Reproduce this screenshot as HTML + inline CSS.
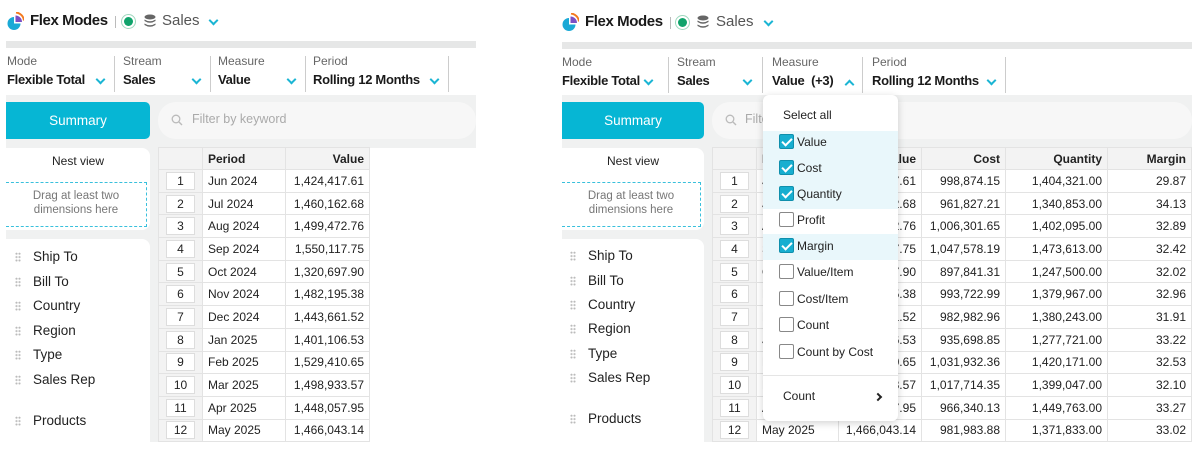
<!DOCTYPE html>
<html><head><meta charset="utf-8"><style>
*{box-sizing:border-box;margin:0;padding:0}
body{width:1192px;height:442px;overflow:hidden;background:#fff;font-family:"Liberation Sans",sans-serif;color:#222;position:relative}
.a{position:absolute}
.title{font-size:15px;font-weight:bold;color:#1a1a1a;letter-spacing:-0.4px}
.sales{font-size:15px;color:#555}
.chev{width:7px;height:7px;border-right:2px solid #1bb5d4;border-bottom:2px solid #1bb5d4;transform:rotate(45deg)}
.chevu{width:7px;height:7px;border-left:2px solid #1bb5d4;border-top:2px solid #1bb5d4;transform:rotate(45deg)}
.lbl{font-size:12px;color:#666}
.val{font-size:13px;font-weight:bold;color:#1a1a1a;letter-spacing:-0.3px}
.div{width:1px;height:36px;background:#ccc}
.gray{background:#f0f1f1}
.sum{background:#06b6d4;color:#fff;font-size:13.5px;text-align:center;line-height:37px;border-radius:0 5px 5px 0}
.filt{background:#f7f7f7;border-radius:18px;font-size:12.5px;color:#aaa}
.card{background:#fff;border-radius:0 8px 8px 0}
.dash{border:1px dashed #39c0dc;border-left:none;font-size:11.5px;color:#777;text-align:center;line-height:14px;padding-top:6px}
.dim{font-size:13.5px;color:#222}
.dots{width:6px;height:10px;background-image:radial-gradient(circle,#bbb 0.9px,transparent 1.1px);background-size:3px 3.4px}
table{border-collapse:collapse;font-size:12px;table-layout:fixed}
td,th{border:1px solid #e3e3e3;height:22.7px;padding:0 5px;white-space:nowrap;overflow:hidden}
th{background:#f3f3f3;font-weight:bold;text-align:right;height:22px}
td{background:#fff;text-align:right}
td.p,th.p{text-align:left}
td.i{background:#f3f3f3;text-align:center;padding:0 7px}
td.i span{display:block;background:#fff;border:1px solid #ddd;height:18px;line-height:17px}
.dd{background:#fff;border-radius:6px;box-shadow:0 2px 8px rgba(0,0,0,.18)}
.it{position:absolute;left:0;width:135px;height:26px;font-size:12px;color:#222;padding-left:34px;line-height:24px}
.it.h{background:#e9f7fb}
.cb{position:absolute;left:16px;top:4px;width:15px;height:15px;border:1px solid #888;border-radius:2px;background:#fff}
.cb.c{background:#17aed0;border-color:#0f8fac}
.cb.c:after{content:"";position:absolute;left:4px;top:1px;width:4px;height:8px;border-right:2px solid #fff;border-bottom:2px solid #fff;transform:rotate(45deg)}
</style></head><body>

<!-- LEFT PANEL -->
<svg class="a" style="left:7px;top:12px" width="17" height="19" viewBox="0 0 17 19"><path d="M7 5 A6.5 6.5 0 1 0 13.5 11.5 L7 11.5Z" fill="#1aa9d6"/><path d="M8.5 3.5 L8.5 10 L15 10 A6.5 6.5 0 0 0 8.5 3.5Z" fill="#7b4fc4"/><path d="M9 0.5 A9 9 0 0 1 17 8.5" stroke="#f47a1f" stroke-width="2" fill="none"/></svg>
<div class="a title" style="left:30px;top:12px">Flex Modes</div>
<div class="a" style="left:115px;top:16px;width:1px;height:12px;background:#bbb"></div>
<div class="a" style="left:121px;top:14px;width:15px;height:15px;border-radius:50%;border:1px solid #9fd8be"></div>
<div class="a" style="left:124px;top:17px;width:9px;height:9px;border-radius:50%;background:#10a36b"></div>
<svg class="a" style="left:144px;top:14px" width="12" height="14" viewBox="0 0 12 14"><ellipse cx="6" cy="3" rx="5.5" ry="2.5" fill="#666"/><path d="M0.5 5.5 Q6 9 11.5 5.5 V7 Q6 10.5 0.5 7Z M0.5 9.5 Q6 13 11.5 9.5 V11 Q6 14.5 0.5 11Z" fill="#666"/></svg>
<div class="a sales" style="left:162px;top:12px">Sales</div>
<div class="a chev" style="left:210px;top:17px"></div>
<div class="a" style="left:6px;top:41px;width:470px;height:7px;background:#e6e7e7"></div>
<div class="a lbl" style="left:7px;top:54px">Mode</div><div class="a val" style="left:7px;top:72px">Flexible Total</div><div class="a chev" style="left:97px;top:76px"></div>
<div class="a div" style="left:114px;top:56px"></div>
<div class="a lbl" style="left:123px;top:54px">Stream</div><div class="a val" style="left:123px;top:72px">Sales</div><div class="a chev" style="left:193px;top:76px"></div>
<div class="a div" style="left:210px;top:56px"></div>
<div class="a lbl" style="left:218px;top:54px">Measure</div><div class="a val" style="left:218px;top:72px">Value</div><div class="a chev" style="left:288px;top:76px"></div>
<div class="a div" style="left:305px;top:56px"></div>
<div class="a lbl" style="left:313px;top:54px">Period</div><div class="a val" style="left:313px;top:72px">Rolling 12 Months</div><div class="a chev" style="left:431px;top:76px"></div>
<div class="a div" style="left:448px;top:56px"></div>
<div class="a gray" style="left:6px;top:95px;width:470px;height:347px"></div>
<div class="a sum" style="left:6px;top:102px;width:144px;height:37px">Summary</div>
<div class="a filt" style="left:158px;top:102px;width:318px;height:37px"></div>
<svg class="a" style="left:171px;top:114px" width="12" height="12"><circle cx="5" cy="5" r="3.8" stroke="#bbb" stroke-width="1.3" fill="none"/><path d="M8 8 L11 11" stroke="#bbb" stroke-width="1.4"/></svg>
<div class="a" style="left:192px;top:112px;font-size:12.5px;color:#aaa">Filter by keyword</div>
<div class="a card" style="left:6px;top:148px;width:144px;height:82px"></div>
<div class="a" style="left:6px;top:154px;width:144px;text-align:center;font-size:12px">Nest view</div>
<div class="a dash" style="left:6px;top:182px;width:141px;height:45px">Drag at least two<br>dimensions here</div>
<div class="a card" style="left:6px;top:239px;width:144px;height:210px"></div>
<div class="a dots" style="left:15px;top:252px"></div><div class="a dim" style="left:33px;top:249px">Ship To</div>
<div class="a dots" style="left:15px;top:277px"></div><div class="a dim" style="left:33px;top:274px">Bill To</div>
<div class="a dots" style="left:15px;top:301px"></div><div class="a dim" style="left:33px;top:298px">Country</div>
<div class="a dots" style="left:15px;top:326px"></div><div class="a dim" style="left:33px;top:323px">Region</div>
<div class="a dots" style="left:15px;top:350px"></div><div class="a dim" style="left:33px;top:347px">Type</div>
<div class="a dots" style="left:15px;top:375px"></div><div class="a dim" style="left:33px;top:372px">Sales Rep</div>
<div class="a dots" style="left:15px;top:416px"></div><div class="a dim" style="left:33px;top:413px">Products</div>
<div class="a" style="left:369px;top:148px;width:107px;height:294px;background:#fff"></div>
<table class="a" style="left:158px;top:147px;width:212px">
<colgroup><col style="width:44px"><col style="width:83px"><col style="width:84px"></colgroup>
<tr><th></th><th class="p">Period</th><th>Value</th></tr>
<tr><td class="i"><span>1</span></td><td class="p">Jun 2024</td><td>1,424,417.61</td></tr>
<tr><td class="i"><span>2</span></td><td class="p">Jul 2024</td><td>1,460,162.68</td></tr>
<tr><td class="i"><span>3</span></td><td class="p">Aug 2024</td><td>1,499,472.76</td></tr>
<tr><td class="i"><span>4</span></td><td class="p">Sep 2024</td><td>1,550,117.75</td></tr>
<tr><td class="i"><span>5</span></td><td class="p">Oct 2024</td><td>1,320,697.90</td></tr>
<tr><td class="i"><span>6</span></td><td class="p">Nov 2024</td><td>1,482,195.38</td></tr>
<tr><td class="i"><span>7</span></td><td class="p">Dec 2024</td><td>1,443,661.52</td></tr>
<tr><td class="i"><span>8</span></td><td class="p">Jan 2025</td><td>1,401,106.53</td></tr>
<tr><td class="i"><span>9</span></td><td class="p">Feb 2025</td><td>1,529,410.65</td></tr>
<tr><td class="i"><span>10</span></td><td class="p">Mar 2025</td><td>1,498,933.57</td></tr>
<tr><td class="i"><span>11</span></td><td class="p">Apr 2025</td><td>1,448,057.95</td></tr>
<tr><td class="i"><span>12</span></td><td class="p">May 2025</td><td>1,466,043.14</td></tr>
</table>

<!-- RIGHT PANEL -->
<svg class="a" style="left:562px;top:13px" width="17" height="19" viewBox="0 0 17 19"><path d="M7 5 A6.5 6.5 0 1 0 13.5 11.5 L7 11.5Z" fill="#1aa9d6"/><path d="M8.5 3.5 L8.5 10 L15 10 A6.5 6.5 0 0 0 8.5 3.5Z" fill="#7b4fc4"/><path d="M9 0.5 A9 9 0 0 1 17 8.5" stroke="#f47a1f" stroke-width="2" fill="none"/></svg>
<div class="a title" style="left:585px;top:13px">Flex Modes</div>
<div class="a" style="left:670px;top:17px;width:1px;height:12px;background:#bbb"></div>
<div class="a" style="left:675px;top:15px;width:15px;height:15px;border-radius:50%;border:1px solid #9fd8be"></div>
<div class="a" style="left:678px;top:18px;width:9px;height:9px;border-radius:50%;background:#10a36b"></div>
<svg class="a" style="left:697px;top:15px" width="12" height="14" viewBox="0 0 12 14"><ellipse cx="6" cy="3" rx="5.5" ry="2.5" fill="#666"/><path d="M0.5 5.5 Q6 9 11.5 5.5 V7 Q6 10.5 0.5 7Z M0.5 9.5 Q6 13 11.5 9.5 V11 Q6 14.5 0.5 11Z" fill="#666"/></svg>
<div class="a sales" style="left:716px;top:13px">Sales</div>
<div class="a chev" style="left:765px;top:18px"></div>
<div class="a" style="left:562px;top:42px;width:630px;height:7px;background:#e6e7e7"></div>
<div class="a lbl" style="left:562px;top:55px">Mode</div><div class="a val" style="left:562px;top:73px">Flexible Total</div><div class="a chev" style="left:645px;top:77px"></div>
<div class="a div" style="left:668px;top:57px"></div>
<div class="a lbl" style="left:677px;top:55px">Stream</div><div class="a val" style="left:677px;top:73px">Sales</div><div class="a chev" style="left:744px;top:77px"></div>
<div class="a div" style="left:762px;top:57px"></div>
<div class="a lbl" style="left:772px;top:55px">Measure</div><div class="a val" style="left:772px;top:73px">Value&nbsp; (+3)</div><div class="a chevu" style="left:846px;top:81px"></div>
<div class="a div" style="left:862px;top:57px"></div>
<div class="a lbl" style="left:872px;top:55px">Period</div><div class="a val" style="left:872px;top:73px">Rolling 12 Months</div><div class="a chev" style="left:988px;top:77px"></div>
<div class="a div" style="left:1005px;top:57px"></div>
<div class="a gray" style="left:562px;top:95px;width:630px;height:347px"></div>
<div class="a sum" style="left:562px;top:102px;width:142px;height:37px">Summary</div>
<div class="a filt" style="left:712px;top:102px;width:480px;height:37px"></div>
<svg class="a" style="left:725px;top:114px" width="12" height="12"><circle cx="5" cy="5" r="3.8" stroke="#bbb" stroke-width="1.3" fill="none"/><path d="M8 8 L11 11" stroke="#bbb" stroke-width="1.4"/></svg>
<div class="a" style="left:745px;top:112px;font-size:12.5px;color:#aaa">Filter by keyword</div>
<div class="a card" style="left:562px;top:148px;width:142px;height:82px"></div>
<div class="a" style="left:562px;top:154px;width:142px;text-align:center;font-size:12px">Nest view</div>
<div class="a dash" style="left:562px;top:182px;width:139px;height:45px">Drag at least two<br>dimensions here</div>
<div class="a card" style="left:562px;top:239px;width:142px;height:210px"></div>
<div class="a dots" style="left:570px;top:251px"></div><div class="a dim" style="left:588px;top:248px">Ship To</div>
<div class="a dots" style="left:570px;top:276px"></div><div class="a dim" style="left:588px;top:273px">Bill To</div>
<div class="a dots" style="left:570px;top:300px"></div><div class="a dim" style="left:588px;top:297px">Country</div>
<div class="a dots" style="left:570px;top:324px"></div><div class="a dim" style="left:588px;top:321px">Region</div>
<div class="a dots" style="left:570px;top:349px"></div><div class="a dim" style="left:588px;top:346px">Type</div>
<div class="a dots" style="left:570px;top:373px"></div><div class="a dim" style="left:588px;top:370px">Sales Rep</div>
<div class="a dots" style="left:570px;top:414px"></div><div class="a dim" style="left:588px;top:411px">Products</div>
<table class="a" style="left:712px;top:147px;width:479px">
<colgroup><col style="width:44px"><col style="width:82px"><col style="width:83px"><col style="width:84px"><col style="width:102px"><col style="width:84px"></colgroup>
<tr><th></th><th class="p">Period</th><th>Value</th><th>Cost</th><th>Quantity</th><th>Margin</th></tr>
<tr><td class="i"><span>1</span></td><td class="p">Jun 2024</td><td>1,424,417.61</td><td>998,874.15</td><td>1,404,321.00</td><td>29.87</td></tr>
<tr><td class="i"><span>2</span></td><td class="p">Jul 2024</td><td>1,460,162.68</td><td>961,827.21</td><td>1,340,853.00</td><td>34.13</td></tr>
<tr><td class="i"><span>3</span></td><td class="p">Aug 2024</td><td>1,499,472.76</td><td>1,006,301.65</td><td>1,402,095.00</td><td>32.89</td></tr>
<tr><td class="i"><span>4</span></td><td class="p">Sep 2024</td><td>1,550,117.75</td><td>1,047,578.19</td><td>1,473,613.00</td><td>32.42</td></tr>
<tr><td class="i"><span>5</span></td><td class="p">Oct 2024</td><td>1,320,697.90</td><td>897,841.31</td><td>1,247,500.00</td><td>32.02</td></tr>
<tr><td class="i"><span>6</span></td><td class="p">Nov 2024</td><td>1,482,195.38</td><td>993,722.99</td><td>1,379,967.00</td><td>32.96</td></tr>
<tr><td class="i"><span>7</span></td><td class="p">Dec 2024</td><td>1,443,661.52</td><td>982,982.96</td><td>1,380,243.00</td><td>31.91</td></tr>
<tr><td class="i"><span>8</span></td><td class="p">Jan 2025</td><td>1,401,106.53</td><td>935,698.85</td><td>1,277,721.00</td><td>33.22</td></tr>
<tr><td class="i"><span>9</span></td><td class="p">Feb 2025</td><td>1,529,410.65</td><td>1,031,932.36</td><td>1,420,171.00</td><td>32.53</td></tr>
<tr><td class="i"><span>10</span></td><td class="p">Mar 2025</td><td>1,498,933.57</td><td>1,017,714.35</td><td>1,399,047.00</td><td>32.10</td></tr>
<tr><td class="i"><span>11</span></td><td class="p">Apr 2025</td><td>1,448,057.95</td><td>966,340.13</td><td>1,449,763.00</td><td>33.27</td></tr>
<tr><td class="i"><span>12</span></td><td class="p">May 2025</td><td>1,466,043.14</td><td>981,983.88</td><td>1,371,833.00</td><td>33.02</td></tr>
</table>

<!-- DROPDOWN -->
<div class="a dd" style="left:763px;top:95px;width:135px;height:326px;overflow:hidden">
<div class="it" style="top:8px;padding-left:20px">Select all</div>
<div class="a" style="left:0;top:36px;width:135px;height:78px;background:#e9f7fb"></div>
<div class="it" style="top:35px"><div class="cb c"></div>Value</div>
<div class="it" style="top:61px"><div class="cb c"></div>Cost</div>
<div class="it" style="top:87px"><div class="cb c"></div>Quantity</div>
<div class="it" style="top:113px"><div class="cb"></div>Profit</div>
<div class="it h" style="top:139px"><div class="cb c"></div>Margin</div>
<div class="it" style="top:165px"><div class="cb"></div>Value/Item</div>
<div class="it" style="top:192px"><div class="cb"></div>Cost/Item</div>
<div class="it" style="top:218px"><div class="cb"></div>Count</div>
<div class="it" style="top:245px"><div class="cb"></div>Count by Cost</div>
<div class="a" style="left:0;top:280px;width:135px;height:1px;background:#e5e5e5"></div>
<div class="it" style="top:289px;padding-left:20px">Count</div>
<div class="a" style="left:112px;top:299px;width:6px;height:6px;border-right:2px solid #222;border-top:2px solid #222;transform:rotate(45deg)"></div>
</div>
</body></html>
